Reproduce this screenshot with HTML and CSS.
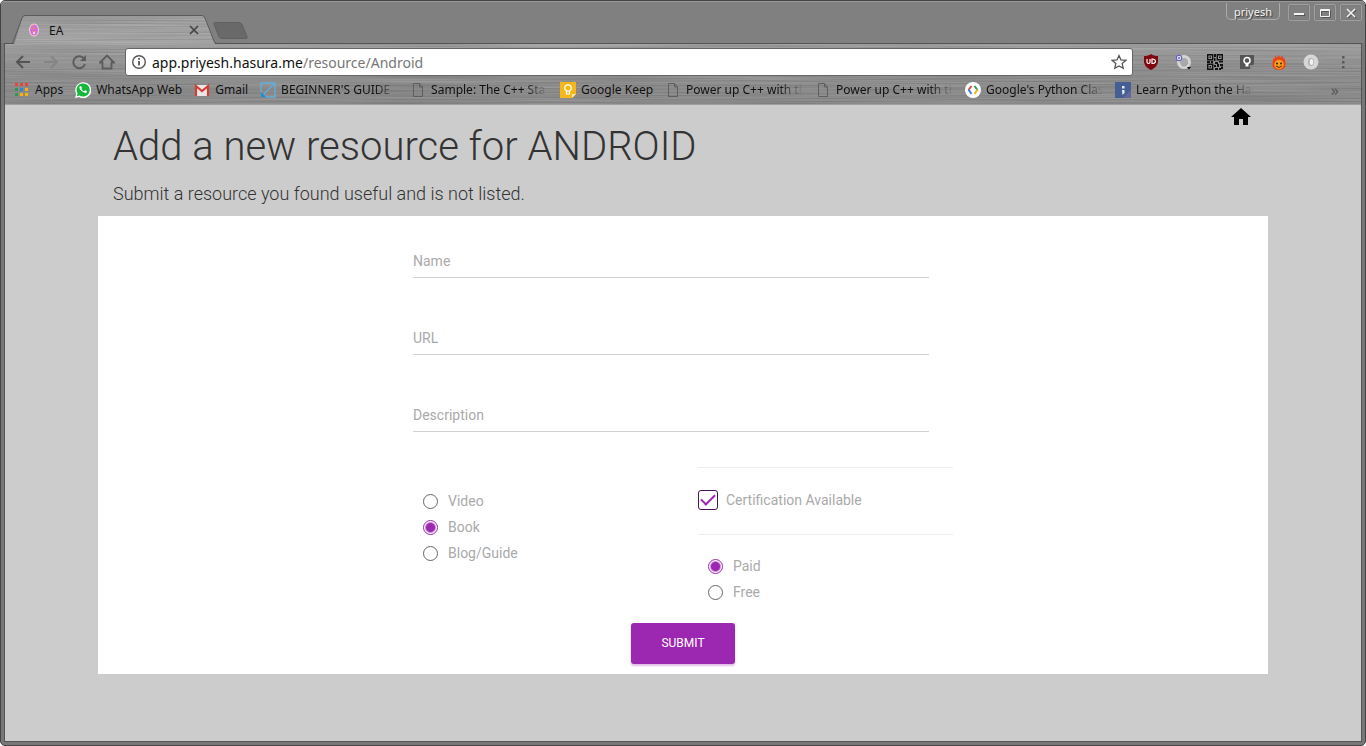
FILE: index.html
```html
<!DOCTYPE html>
<html lang="en">
<head>
  <meta charset="UTF-8">
  <meta name="viewport" content="width=device-width, initial-scale=1.0">
  <title>EA</title>
  <link rel="stylesheet" href="styles.css">
</head>
<body>
  <div class="window">
    <!-- title bar -->
    <div class="titlebar">
      <div class="tab">
        <svg class="tab-shape" viewBox="0 0 206 30" aria-hidden="true">
          <defs>
            <linearGradient id="tabMetal" x1="0" y1="0" x2="0" y2="1">
              <stop offset="0" stop-color="#9c9c9c"/>
              <stop offset="1" stop-color="#a6a6a6"/>
            </linearGradient>
            <filter id="brushed" x="0" y="0" width="100%" height="100%" color-interpolation-filters="sRGB">
              <feTurbulence type="fractalNoise" baseFrequency="0.006 0.7" numOctaves="2" seed="4"/>
              <feColorMatrix values="0.7 0 0 0 0.25  0.7 0 0 0 0.25  0.7 0 0 0 0.25  0 0 0 0 0.25"/>
              <feComposite in2="SourceGraphic" operator="in" result="lines"/>
              <feMerge><feMergeNode in="SourceGraphic"/><feMergeNode in="lines"/></feMerge>
            </filter>
          </defs>
          <path d="M0 30 Q3 30 4 27 L11 4 Q12 .5 15 .5 H191 Q193 .5 194 3 L203 27 Q204 30 206 30Z" fill="url(#tabMetal)" filter="url(#brushed)"/>
          <path d="M0 28.5 Q1 29 2 27 L11 3 Q12 .5 14 .5 H191 Q193 .5 194 3 L203 26 Q204 28.5 206 28.5" fill="none" stroke="#5a5a5a"/>
        </svg>
        <svg class="tab-icon" viewBox="0 0 16 16" aria-hidden="true">
          <ellipse cx="8" cy="8" rx="4.500" ry="6" fill="#cf6be0" stroke="#f3c6cf" stroke-width="1.200"/>
          <path d="M6 4q2-1 3 1M5 7q2-2 5 0M6 9q2 2 4 0" fill="none" stroke="#ef8c75"/>
          <circle cx="8" cy="11" r="1.200" fill="#f7d6f5"/>
        </svg>
        <span class="tab-title">EA</span>
        <button class="tab-close" aria-label="Close tab">
          <svg width="10" height="10" viewBox="0 0 10 10"><path d="M1 1l8 8M9 1l-8 8" stroke="#444" stroke-width="1.700"/></svg>
        </button>
      </div>
      <button class="new-tab" aria-label="New tab"></button>
      <div class="window-controls">
        <span class="user">priyesh</span>
        <button aria-label="Minimize"><svg viewBox="0 0 12 12"><path d="M1 7h10" stroke="#f4f4f4" stroke-width="2"/></svg></button>
        <button aria-label="Maximize"><svg viewBox="0 0 12 12"><path d="M1.500 2.500h9v7h-9zM1.500 3.500h9" fill="none" stroke="#f4f4f4"/></svg></button>
        <button aria-label="Close"><svg viewBox="0 0 12 12"><path d="M2 2l8 8M10 2l-8 8" stroke="#f4f4f4" stroke-width="1.500"/></svg></button>
      </div>
    </div>

    <div class="client">
      <div class="chrome">
        <svg class="metal" aria-hidden="true">
          <defs>
            <linearGradient id="barMetal" x1="0" y1="0" x2="0" y2="1">
              <stop offset="0" stop-color="#a0a0a0"/>
              <stop offset=".4" stop-color="#8b8b8b"/>
              <stop offset="1" stop-color="#828282"/>
            </linearGradient>
          </defs>
          <rect width="100%" height="100%" fill="url(#barMetal)" filter="url(#brushed)"/>
        </svg>

        <!-- address bar -->
        <div class="toolbar">
          <div class="nav-buttons">
            <button aria-label="Back"><svg viewBox="0 0 16 16"><path d="M15 8H2M8 2L2 8l6 6" fill="none" stroke="#555" stroke-width="2"/></svg></button>
            <button aria-label="Forward"><svg viewBox="0 0 16 16"><path d="M1 8h13M8 2l6 6-6 6" fill="none" stroke="#858585" stroke-width="2"/></svg></button>
            <button aria-label="Reload"><svg viewBox="0 0 16 16"><path d="M13 4.500A6 6 0 1 0 14 10" fill="none" stroke="#5c5c5c" stroke-width="2"/><path d="M15 1v6H9z" fill="#5c5c5c"/></svg></button>
            <button aria-label="Home"><svg viewBox="0 0 16 16"><path d="M1 8.500L8 1.500l7 7H12.500V14.500h-9V8.500z" fill="none" stroke="#5c5c5c" stroke-width="1.800"/></svg></button>
          </div>
          <div class="address">
            <svg width="16" height="16" viewBox="0 0 16 16" aria-hidden="true"><circle cx="8" cy="8" r="6.300" fill="none" stroke="#555" stroke-width="1.400"/><path d="M8 7v4.500M8 4v1.800" stroke="#555" stroke-width="1.800"/></svg>
            <label for="url-path">app.priyesh.hasura.me</label>
            <input type="text" id="url-path" value="/resource/Android">
            <button aria-label="Bookmark"><svg width="16" height="16" viewBox="0 0 16 16"><path d="M8 1.500l2 4.400 4.800.5-3.600 3.200 1 4.700L8 11.900l-4.200 2.400 1-4.700L1.200 6.400 6 5.900z" fill="none" stroke="#555" stroke-width="1.300"/></svg></button>
          </div>
          <div class="extensions">
            <button aria-label="uBlock"><svg viewBox="0 0 16 16"><path d="M8 0c2 1.500 4 2 7 2v5c0 4-2.500 7-7 9-4.500-2-7-5-7-9V2c3 0 5-.5 7-2z" fill="#800610"/><path d="M4 5v3q0 1.500 1.500 1.500T7 8V5M9 5v4.500h1q2.500-.500 2.500-2.200T10 5z" fill="none" stroke="#fff" stroke-width="1.200"/></svg></button>
            <button aria-label="Page tools"><svg viewBox="0 0 16 16"><circle cx="9" cy="8" r="5.500" fill="#aaa" stroke="#d4d4d4" stroke-width="3"/><path d="M7 12q4 1 6-3" fill="none" stroke="#999"/><circle cx="4" cy="4" r="2.800" fill="#ddf" stroke="#5750bd"/><path d="M3 4h2M4 3v2" stroke="#5750bd" stroke-width=".8"/><path d="M12 13h4l-2 2.500z" fill="#111"/></svg></button>
            <button aria-label="QR code"><svg viewBox="0 0 16 16"><path d="M.7.7h5v5h-5zM10.300.7h5v5h-5zM.7 10.300h5v5h-5z" fill="none" stroke="#111" stroke-width="1.400"/><path d="M2.500 2.500h1.500v1.500H2.500zM12 2.500h1.500v1.500H12zM2.500 12h1.500v1.500H2.500zM7 0h2v3H7zM7 4h1.500v3H7zM0 7h3v2H0zM4 7h2v2H4zM8 8h3v2H8zM12 7h4v1.500h-4zM7 11h2v2H7zM10 10h2v3h-2zM13 10h3v2h-3zM8 14h3v2H8zM12 14h2v2h-2zM14 12.500h2V15h-2z" fill="#111"/></svg></button>
            <button aria-label="Keep"><svg viewBox="0 0 16 16"><path d="M1 1h14v9l-4 5H1z" fill="#555"/><path d="M11 15v-4h4z" fill="#888"/><circle cx="8" cy="6.500" r="3" fill="none" stroke="#fff" stroke-width="1.500"/><path d="M6.500 9h3v3.500h-3z" fill="#fff"/></svg></button>
            <button aria-label="Hot"><svg viewBox="0 0 16 16"><path d="M8 0q-.5 2 1.500 3.500L11.500 1q-.5 2.500 1.500 4l1-1q-.5 2 .5 4.500Q15.500 16 8 16T1.500 8.500Q2.500 6 2 4l1 1q1.500-1 1-3.500l2 2Q8 2 8 0z" fill="#e8431a"/><circle cx="8" cy="10.500" r="4.700" fill="#fb9d16"/><circle cx="6" cy="9.500" r="1" fill="#321"/><circle cx="10" cy="9.500" r="1" fill="#321"/><path d="M5 12q3 3 6 0" fill="none" stroke="#521"/></svg></button>
            <button aria-label="Proxy"><svg viewBox="0 0 16 16"><circle cx="8" cy="8" r="7.500" fill="#d7d7d7"/><ellipse cx="8" cy="8" rx="3" ry="4" fill="#b0b0b0"/><ellipse cx="8.500" cy="8" rx="1.800" ry="3" fill="#f2f2f2"/></svg></button>
            <button aria-label="Menu"><svg viewBox="0 0 16 16"><path d="M7 2h2.500v2.500H7zM7 7h2.500v2.500H7zM7 12h2.500v2.500H7z" fill="#5a5a5a"/></svg></button>
          </div>
        </div>

        <!-- bookmarks -->
        <div class="bookmarks">
          <a href="#"><svg viewBox="0 0 16 16"><path d="M1 1h3v3H1zM6 1h3v3H6zM11 1h3v3h-3z" fill="#e8443a"/><path d="M1 6h3v3H1zM1 11h3v3H1z" fill="#2b9c4e"/><path d="M6 6h3v3H6z" fill="#317fe8"/><path d="M11 6h3v3h-3zM6 11h3v3H6zM11 11h3v3h-3z" fill="#f7b10c"/></svg><span>Apps</span></a>
          <a href="#"><svg viewBox="0 0 16 16"><path d="M0 16l1.200-4A8 8 0 1 1 4 15z" fill="#fff"/><path d="M1.700 14.300l.9-2.700A6.600 6.600 0 1 1 4.500 13.500z" fill="#16b83c"/><path d="M5 4.200l1-.3 1 2-.6 1q1 1.800 2.600 2.300l1-1 2 1-.3 1.200q-1.500 1.300-4.500-.9T4.300 5.500z" fill="#fff"/></svg><span>WhatsApp Web</span></a>
          <a href="#"><svg viewBox="0 0 16 16"><path d="M1 3h14v11H1z" fill="#e8e8e8"/><path d="M2 14V4l6 5 6-5v10" fill="none" stroke="#d33d32" stroke-width="2.200"/></svg><span>Gmail</span></a>
          <a href="#"><svg viewBox="0 0 16 16"><path d="M1 9V1h14v14H7M15 1L2 14M1.500 9v5.500H7" fill="none" stroke="#62b0de" stroke-width="1.300"/><path d="M1 10v5h5z" fill="#248bcc"/></svg><span class="long">BEGINNER'S GUIDE</span></a>
          <a href="#"><svg viewBox="0 0 16 16"><path d="M3.500 1.500h6l3 3.500v9.500h-9zM9.500 1.500V5h3" fill="none" stroke="#5e5e5e"/></svg><span class="long">Sample: The C++ Sta</span></a>
          <a href="#"><svg viewBox="0 0 16 16"><path d="M0 0h16v12l-4 4H0z" fill="#f5b81c"/><path d="M12 16v-4h4z" fill="#fce6a6"/><circle cx="8" cy="6" r="3.200" fill="none" stroke="#fff" stroke-width="1.200"/><path d="M6.500 9v3h3V9" fill="none" stroke="#fff" stroke-width="1.200"/></svg><span>Google Keep</span></a>
          <a href="#"><svg viewBox="0 0 16 16"><path d="M3.500 1.500h6l3 3.500v9.500h-9zM9.500 1.500V5h3" fill="none" stroke="#5e5e5e"/></svg><span class="long">Power up C++ with th</span></a>
          <a href="#"><svg viewBox="0 0 16 16"><path d="M3.500 1.500h6l3 3.500v9.500h-9zM9.500 1.500V5h3" fill="none" stroke="#5e5e5e"/></svg><span class="long">Power up C++ with th</span></a>
          <a href="#"><svg viewBox="0 0 16 16"><circle cx="8" cy="8" r="8" fill="#fff"/><path d="M6.500 4L3.500 8" stroke="#e04a3f" stroke-width="2"/><path d="M3.500 7.500l3 4.500" stroke="#3d7de8" stroke-width="2"/><path d="M9.500 4l3 4" stroke="#25a05a" stroke-width="2"/><path d="M12.500 7.500l-3 4.500" stroke="#f0b51f" stroke-width="2"/></svg><span class="long">Google's Python Clas</span></a>
          <a href="#"><svg viewBox="0 0 16 16"><path d="M0 0h16v16H0z" fill="#455f94"/><path d="M8 16h8V8z" fill="#66669c"/><path d="M7 4h2.500v2.500H7zM7 8h2.500v3L7.500 13z" fill="#e8ecf4"/></svg><span class="long">Learn Python the Har</span></a>
          <button class="more" aria-label="More bookmarks">»</button>
        </div>
      </div>

      <main class="page">
        <div class="container">
          <header class="page-header">
            <div>
              <h1>Add a new resource for ANDROID</h1>
              <p class="subtitle">Submit a resource you found useful and is not listed.</p>
            </div>
            <a href="#" class="home-link" aria-label="Home"><svg width="24" height="24" viewBox="0 0 24 24"><path d="M10 20v-6h4v6h5v-8h3L12 3 2 12h3v8z"/></svg></a>
          </header>

          <div class="card">
            <form class="resource-form">
              <div class="field">
                <label for="name">Name</label>
                <input type="text" id="name">
              </div>
              <div class="field">
                <label for="url">URL</label>
                <input type="text" id="url">
              </div>
              <div class="field">
                <label for="description">Description</label>
                <input type="text" id="description">
              </div>
              <div class="options">
                <div class="radios type">
                  <label><input type="radio" name="type" value="video">Video</label>
                  <label><input type="radio" name="type" value="book" checked>Book</label>
                  <label><input type="radio" name="type" value="blog">Blog/Guide</label>
                </div>
                <div>
                  <label class="checkbox"><input type="checkbox" id="certification" checked>Certification Available</label>
                  <div class="radios">
                    <label><input type="radio" name="price" value="paid" checked>Paid</label>
                    <label><input type="radio" name="price" value="free">Free</label>
                  </div>
                </div>
              </div>
              <button type="button" class="submit">SUBMIT</button>
            </form>
          </div>
        </div>
      </main>
    </div>
  </div>
</body>
</html>
```
FILE: styles.css
```css
* {
    margin: 0;
    padding: 0;
    box-sizing: border-box;
}

body {
    background: #fff;
    font-family: 'Noto Sans', sans-serif;
    font-size: 12px;
    color: #111;
}

button {
    background: none;
    border: none;
    font-family: inherit;
    cursor: pointer;
}

button svg {
    display: block;
}

/* window frame */
.window {
    min-height: 100vh;
    display: flex;
    flex-direction: column;
    padding: 0 3px 3px;
    background: #777;
    border: 1px solid #454344;
    border-radius: 5px;
}

.titlebar {
    display: flex;
    align-items: flex-start;
    height: 42px;
    margin: 0 -3px;
    padding-left: 10px;
    background: #808080;
    border-top: 1px solid #999;
    border-radius: 4px 4px 0 0;
}

.tab {
    position: relative;
    z-index: 1;
    display: flex;
    align-items: center;
    width: 206px;
    height: 30px;
    margin-top: 13px;
    padding: 0 15px;
}

.tab-shape {
    position: absolute;
    inset: 0;
    z-index: -1;
    width: 100%;
    height: 100%;
}

.tab-icon {
    width: 16px;
    height: 16px;
    margin-right: 7px;
}

.tab-title {
    flex: 1;
}

.tab-close {
    margin-right: 3px;
}

.new-tab {
    width: 29px;
    height: 17px;
    margin: 20px 0 0 -1px;
    background: #696969;
    border: 1px solid #606060;
    border-radius: 3px;
    transform: skewX(22deg);
}

.window-controls {
    display: flex;
    align-items: flex-start;
    gap: 4px;
    margin-left: auto;
    padding: 1px 3px 0 0;
}

.user {
    height: 17px;
    margin-right: 4px;
    padding: 0 7px;
    border: 1px solid #aaa;
    border-top: none;
    border-radius: 0 0 5px 5px;
    font-size: 11px;
    line-height: 17px;
    color: #f4f4f4;
    text-shadow: 1px 1px 1px #333;
}

.window-controls button {
    display: grid;
    place-items: center;
    width: 22px;
    height: 17px;
    margin-top: 1px;
    border: 1px solid #a0a0a0;
    border-radius: 2px;
    box-shadow: inset 0 0 1px #555;
}

.window-controls button svg {
    width: 12px;
    height: 12px;
    filter: drop-shadow(1px 1px 0 #555);
}

.client {
    flex: 1;
    display: flex;
    flex-direction: column;
    border: 1px solid #555;
}

/* toolbar and bookmarks */
.chrome {
    position: relative;
    z-index: 0;
    border-bottom: 1px solid #a0a0a0;
}

.metal {
    position: absolute;
    inset: 0;
    z-index: -1;
    width: 100%;
    height: 100%;
}

.toolbar {
    display: flex;
    align-items: center;
    padding: 4px 2px 0 4px;
}

.nav-buttons {
    display: flex;
    margin-right: 4px;
}

.nav-buttons button {
    display: grid;
    place-items: center;
    width: 28px;
    height: 28px;
}

.nav-buttons svg,
.extensions svg {
    width: 16px;
    height: 16px;
}

.address {
    flex: 1;
    display: flex;
    align-items: center;
    height: 28px;
    padding: 0 5px;
    background: #fff;
    border: 1px solid #666;
    border-radius: 3px;
    font-size: 14px;
}

.address label {
    margin-left: 5px;
}

.address input {
    flex: 1;
    min-width: 0;
    border: none;
    outline: none;
    font-family: inherit;
    font-size: 14px;
    color: #777;
}

.extensions {
    display: flex;
    margin-left: 2px;
}

.extensions button {
    display: grid;
    place-items: center;
    width: 32px;
    height: 28px;
}

.bookmarks {
    display: flex;
    align-items: center;
    gap: 12px;
    height: 28px;
    padding: 0 22px 1px 9px;
}

.bookmarks a {
    display: flex;
    flex-shrink: 0;
    align-items: center;
    gap: 5px;
    color: #111;
    text-decoration: none;
    white-space: nowrap;
}

.bookmarks svg {
    width: 16px;
    height: 16px;
}

.bookmarks .long {
    width: 117px;
    -webkit-mask-image: linear-gradient(to right, #000 80%, transparent);
    mask-image: linear-gradient(to right, #000 80%, transparent);
}

.more {
    margin-left: auto;
    font-size: 16px;
    line-height: 16px;
    color: #555;
}

/* page */
.page {
    flex: 1;
    background: #ccc;
    font-family: Roboto, sans-serif;
    font-size: 14px;
    color: #333;
}

.container {
    width: 100%;
    max-width: 1170px;
    margin: 0 auto;
}

.page-header {
    display: flex;
    align-items: flex-start;
    justify-content: space-between;
    padding: 0 15px 10px;
}

.page-header h1 {
    margin-top: 18px;
    font-size: 40px;
    font-weight: 300;
    line-height: 48px;
}

.subtitle {
    margin-top: 10px;
    font-size: 18px;
    font-weight: 300;
    line-height: 25px;
}

.home-link svg {
    display: block;
    fill: #000;
}

.card {
    background: #fff;
    padding: 27px 15px 10px;
}

.resource-form {
    display: flex;
    flex-direction: column;
    max-width: 540px;
    margin: 0 auto;
}

.field {
    display: grid;
    margin: 0 24px 42px 0;
}

.field label,
.field input {
    grid-area: 1 / 1;
}

.field label {
    align-self: center;
    color: #aaa;
    pointer-events: none;
}

.field input {
    height: 35px;
    border: none;
    border-bottom: 1px solid #d2d2d2;
    outline: none;
    background: transparent;
    font-family: inherit;
    font-size: 14px;
}

.options {
    display: grid;
    grid-template-columns: 1fr 1fr;
    gap: 30px;
    margin-top: -7px;
    color: #aaa;
}

.radios {
    padding: 18px 10px;
}

.radios.type {
    padding-top: 21px;
}

.radios label {
    display: flex;
    align-items: center;
    gap: 10px;
    height: 26px;
}

.radios input {
    appearance: none;
    width: 15px;
    height: 15px;
    border: 1px solid #666;
    border-radius: 50%;
}

.radios input:checked {
    border-color: #9c27b0;
    background: radial-gradient(circle, #9c27b0 4px, transparent 6px);
}

.checkbox {
    display: flex;
    align-items: center;
    gap: 8px;
    height: 68px;
    padding-bottom: 2px;
    border-top: 1px solid #eee;
    border-bottom: 1px solid #eee;
}

.checkbox input {
    appearance: none;
    display: grid;
    place-items: center;
    width: 20px;
    height: 20px;
    border: 1px solid #4a1259;
    border-radius: 3px;
}

.checkbox input:checked::before {
    content: '';
    width: 12px;
    height: 6px;
    margin-top: -4px;
    border-left: 2px solid #9c27b0;
    border-bottom: 2px solid #9c27b0;
    transform: rotate(-45deg);
}

.submit {
    align-self: center;
    padding: 12px 30px;
    background: #9c27b0;
    border-radius: 3px;
    box-shadow: 0 2px 2px rgba(156, 39, 176, 0.3);
    color: #fff;
    font-size: 12px;
    line-height: 17px;
}
```
